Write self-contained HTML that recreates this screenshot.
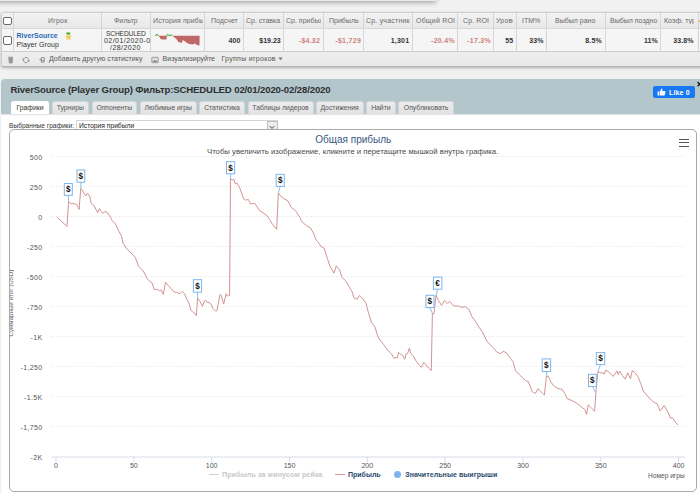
<!DOCTYPE html>
<html><head><meta charset="utf-8">
<style>
*{margin:0;padding:0;box-sizing:border-box}
html,body{width:700px;height:494px;overflow:hidden}
body{position:relative;background:#f1f1f1;font-family:"Liberation Sans",sans-serif;color:#333}
.a{position:absolute;white-space:nowrap}
.vl{position:absolute;width:1px;background:#d6d6d6;top:13px;height:38px}
.th{position:absolute;top:17.2px;font-size:7px;line-height:7px;color:#6a6a6a;white-space:nowrap}
.td{position:absolute;top:37.4px;font-size:7px;line-height:7px;color:#333;font-weight:bold;white-space:nowrap;text-align:right;width:60px}
.red{color:#cf7f7f}
.tab{position:absolute;top:101px;height:13px;background:linear-gradient(#ececec,#e2e2e2);border:1px solid #d2d6d8;border-bottom:none;border-radius:3px 3px 0 0;font-size:6.8px;line-height:11px;color:#555;text-align:center;white-space:nowrap}
.yl{position:absolute;left:2.5px;margin-top:.7px;font-size:7px;line-height:7px;color:#555;text-align:right;width:40px;white-space:nowrap;letter-spacing:.35px}
.xl{position:absolute;top:462.3px;font-size:7px;line-height:7px;color:#555;white-space:nowrap;width:30px;text-align:center}
.tb{position:absolute;top:55.4px;font-size:7px;line-height:7px;color:#555;white-space:nowrap}
</style></head><body>

<!-- top panel shadow -->
<div class="a" style="left:-5px;top:-10px;width:441px;height:11px;background:#ebebeb;box-shadow:0 1.5px 5px rgba(0,0,0,.32)"></div>

<!-- table -->
<div class="a" style="left:1px;top:12px;width:720px;height:55px;border:1px solid #cfcfcf;border-bottom-color:#b4b4b4;border-radius:3px;background:#f5f5f5;box-shadow:0 1px 3px rgba(0,0,0,.28);overflow:hidden">
  <div class="a" style="left:0;top:0;width:720px;height:16px;background:linear-gradient(#f2f2f2,#e8e8e8);border-bottom:1px solid #d8d8d8"></div>
  <div class="a" style="left:0;top:38px;width:720px;height:16px;background:linear-gradient(#eeeeee,#e8e8e8);border-top:1px solid #cdcdcd"></div>
</div>
<!-- column separators -->
<div class="vl" style="left:13px"></div>
<div class="vl" style="left:101px"></div>
<div class="vl" style="left:150px"></div>
<div class="vl" style="left:204px"></div>
<div class="vl" style="left:243px"></div>
<div class="vl" style="left:283px"></div>
<div class="vl" style="left:323px"></div>
<div class="vl" style="left:363px"></div>
<div class="vl" style="left:412px"></div>
<div class="vl" style="left:457px"></div>
<div class="vl" style="left:493px"></div>
<div class="vl" style="left:516px"></div>
<div class="vl" style="left:546px"></div>
<div class="vl" style="left:605px"></div>
<div class="vl" style="left:660px"></div>
<div class="vl" style="left:698px"></div>

<!-- checkboxes -->
<div class="a" style="left:3px;top:16.5px;width:9px;height:8.5px;border:1.5px solid #6a6a6a;border-radius:2px;background:#fff"></div>
<div class="a" style="left:3px;top:36px;width:9px;height:8.5px;border:1.5px solid #6a6a6a;border-radius:2px;background:#fff"></div>

<!-- header texts -->
<div class="th" style="left:48px;letter-spacing:.2px">Игрок</div>
<div class="th" style="left:114px">Фильтр</div>
<div class="th" style="left:153px;width:50px;overflow:hidden;letter-spacing:.1px">История прибыль</div>
<div class="th" style="left:211px">Подсчет</div>
<div class="th" style="left:246px">Ср. ставка</div>
<div class="th" style="left:286px;width:35px;overflow:hidden">Ср. прибыль</div>
<div class="th" style="left:329px">Прибыль</div>
<div class="th" style="left:366px;letter-spacing:.2px">Ср. участник</div>
<div class="th" style="left:416px;letter-spacing:.2px">Общий ROI</div>
<div class="th" style="left:463px;letter-spacing:.1px">Ср. ROI</div>
<div class="th" style="left:496px;width:17px;overflow:hidden;letter-spacing:.2px">Уровень</div>
<div class="th" style="left:522px">ITM%</div>
<div class="th" style="left:555px">Выбыл рано</div>
<div class="th" style="left:610px">Выбыл поздно</div>
<div class="th" style="left:664px;width:30px;overflow:hidden">Коэф. турнира</div>
<div class="th" style="left:699px;color:#e0a040">•</div>

<!-- data row -->
<div class="a" style="left:16.5px;top:32.4px;font-size:7px;line-height:7px;font-weight:bold;color:#2d6bb5">RiverSource</div>
<div class="a" style="left:16.5px;top:41.3px;font-size:7px;line-height:7px;color:#333;letter-spacing:.1px">Player Group</div>
<!-- star -->
<svg class="a" style="left:64px;top:32px" width="9" height="9" viewBox="0 0 9 9"><path d="M2.2,0.4 h4.2 l-0.6,2.4 h-3z" fill="#4fa628"/><path d="M4.5,2 L5.4,4.1 L7.6,4.2 L5.9,5.6 L6.5,7.9 L4.5,6.6 L2.5,7.9 L3.1,5.6 L1.4,4.2 L3.6,4.1z" fill="#f3cf4f" stroke="#e6b93a" stroke-width=".3"/></svg>

<div class="a" style="left:106px;top:30.4px;font-size:6.6px;line-height:7px;color:#333;letter-spacing:-.1px">SCHEDULED</div>
<div class="a" style="left:104px;top:37.3px;font-size:7px;line-height:7px;color:#333;letter-spacing:.45px">02/01/2020-0</div>
<div class="a" style="left:110px;top:44.3px;font-size:7px;line-height:7px;color:#333;letter-spacing:.45px">/28/2020</div>
<!-- sparkline -->
<svg class="a" style="left:150px;top:30px" width="54" height="20" viewBox="150 30 54 20">
<path d="M158.7,35.8 L160.9,39.3 L162.8,39.6 L166.5,39.6 L166.9,35.8z M172.4,35.8 L176.5,39.3 L178.4,41.9 L181.7,43 L182.8,40 L185,41.5 L188.4,43.7 L192.5,44.5 L194.7,43.4 L197.3,44.9 L199.5,45.6 L199.6,35.8z" fill="#c06868"/>
<path d="M155.3,35.8 L156.8,34.4 L158.7,35.8 M166.5,35.8 L167.8,34.4 L169.4,35.8 L170.8,34.8 L172.4,35.8" fill="none" stroke="#5cb346" stroke-width="1.1"/>
</svg>
<div class="td" style="left:180.3px">400</div>
<div class="td" style="left:220.7px">$19.23</div>
<div class="td red" style="left:260px;letter-spacing:.2px">-$4.32</div>
<div class="td red" style="left:301.1px;letter-spacing:.3px">-$1,729</div>
<div class="td" style="left:349.3px;letter-spacing:.2px">1,301</div>
<div class="td red" style="left:395px;letter-spacing:.3px">-20.4%</div>
<div class="td red" style="left:431.1px;letter-spacing:.3px">-17.3%</div>
<div class="td" style="left:453.1px">55</div>
<div class="td" style="left:483.6px;letter-spacing:.1px">33%</div>
<div class="td" style="left:542px;letter-spacing:.2px">8.5%</div>
<div class="td" style="left:597.9px;letter-spacing:.1px">11%</div>
<div class="td" style="left:633.6px;letter-spacing:.1px">33.8%</div>

<!-- toolbar -->
<svg class="a" style="left:0;top:50px" width="50" height="18" viewBox="0 50 50 18">
<path d="M8.2,57.2 h5 M8.9,58 h3.6 l-.4,5 h-2.8z" fill="#9a9a9a" stroke="#8a8a8a" stroke-width=".8"/>
<path d="M24.3,58.2 a2.5,2.5 0 0 1 3.9,3.1 M27.7,61.9 a2.5,2.5 0 0 1 -3.9,-3.1" fill="none" stroke="#8e8e8e" stroke-width=".9"/>
<path d="M27.9,60.2 l.8,1.4 l.9,-1.3 M23.9,59.8 l-.7,-1.4 l-.9,1.3" fill="none" stroke="#8e8e8e" stroke-width=".7"/>
<path d="M41.3,57.6 h3 v3 h-3z M39.4,59.5 h1.9 v2.7 h2.7 v-1.6" fill="none" stroke="#8a8a8a" stroke-width=".9"/>
</svg>
<div class="tb" style="left:49px;letter-spacing:.05px">Добавить другую статистику</div>
<svg class="a" style="left:151px;top:56px" width="8" height="8" viewBox="0 0 8 8"><rect x=".8" y="1.3" width="6.4" height="5.4" rx=".6" fill="#ddd" stroke="#8a8a8a" stroke-width=".8"/><path d="M1.5,6 L3.3,3.8 L4.6,5 L5.4,4.3 L6.6,6z" fill="#888"/></svg>
<div class="tb" style="left:162.6px">Визуализируйте</div>
<div class="tb" style="left:221.4px;letter-spacing:.3px">Группы игроков</div>
<svg class="a" style="left:278px;top:57px" width="5" height="4" viewBox="0 0 5 4"><path d="M0.3,0.6 h4.4 L2.5,3.3z" fill="#777"/></svg>

<!-- blue header panel -->
<div class="a" style="left:1px;top:79px;width:710px;height:35px;background:#b3c6cc;border-radius:4px 0 0 0"></div>
<div class="a" style="left:10.5px;top:85.2px;font-size:9.6px;line-height:9px;font-weight:bold;color:#2f2f2f;letter-spacing:-.14px">RiverSource (Player Group) Фильтр:SCHEDULED 02/01/2020-02/28/2020</div>

<!-- tabs -->
<div class="tab" style="left:11px;width:38px;background:#fff;border-color:#fff;color:#333">Графики</div>
<div class="tab" style="left:51.5px;width:37.5px">Турниры</div>
<div class="tab" style="left:91.5px;width:45.5px">Оппоненты</div>
<div class="tab" style="left:140px;width:56.6px">Любимые игры</div>
<div class="tab" style="left:198.6px;width:46.8px">Статистика</div>
<div class="tab" style="left:247.5px;width:66px">Таблицы лидеров</div>
<div class="tab" style="left:315.6px;width:48px">Достижения</div>
<div class="tab" style="left:365.7px;width:30.4px">Найти</div>
<div class="tab" style="left:397.9px;width:56.4px">Опубликовать</div>

<!-- like -->
<div class="a" style="left:653px;top:86.4px;width:42px;height:12px;background:#1877f2;border-radius:2px"></div>
<svg class="a" style="left:657px;top:88px" width="9" height="8" viewBox="0 0 9 8"><path d="M0.6,3.6 h1.6 v4 h-1.6z M2.8,3.6 L4.6,0.6 Q5.6,0.6 5.4,2 L5.2,3 h2.6 q.8,.1 .6,1 l-.6,3 q-.2,.6 -.8,.6 h-4.2z" fill="#fff"/></svg>
<div class="a" style="left:669px;top:88.7px;font-size:7px;line-height:7px;font-weight:bold;color:#fff;letter-spacing:.15px">Like 0</div>
<svg class="a" style="left:696px;top:80px" width="4" height="8" viewBox="696 80 4 8"><path d="M697.6,82 L701.5,86.4 M697.6,86.4 L701.5,82" stroke="#111" stroke-width="1.3"/></svg>

<!-- white content -->
<div class="a" style="left:1.2px;top:114px;width:710px;height:390px;background:#fff;box-shadow:inset 0 1px 1px rgba(0,0,0,.12)"></div>
<div class="a" style="left:9px;top:122.5px;font-size:6.6px;line-height:6px;color:#333">Выбранные графики:</div>
<div class="a" style="left:76px;top:120.4px;width:202px;height:10px;border:1px solid #d4d4d4;border-bottom:none;background:#fff"></div>
<div class="a" style="left:79px;top:122.5px;font-size:6.7px;line-height:6px;color:#222">История прибыли</div>
<div class="a" style="left:267px;top:120.6px;width:10.6px;height:9px;border:1px solid #bdbdbd;background:#ececec"></div>
<svg class="a" style="left:269px;top:125px" width="6" height="5" viewBox="0 0 6 5"><path d="M0.8,1.2 L3,3.4 L5.2,1.2" fill="none" stroke="#444" stroke-width="1" stroke-linejoin="miter"/></svg>

<!-- chart container -->
<div class="a" style="left:9px;top:129px;width:688px;height:363px;border:1.6px solid #a8a8a8;border-radius:5px;background:#fff;overflow:hidden">
  <div class="a" style="left:0.6px;top:172.9px;font-size:6.2px;line-height:6px;color:#555;transform:translate(-50%,-50%) rotate(-90deg)">Суммарный итог (USD)</div>
</div>

<!-- chart texts -->
<div class="a" style="left:315.3px;top:135.2px;font-size:10px;line-height:10px;color:#375882">Общая прибыль</div>
<div class="a" style="left:207px;top:147.5px;font-size:7.74px;line-height:7px;color:#4a4a4a">Чтобы увеличить изображение, кликните и перетащите мышкой внутрь графика.</div>
<div class="yl" style="top:153px">500</div>
<div class="yl" style="top:183px">250</div>
<div class="yl" style="top:213px">0</div>
<div class="yl" style="top:243px">-250</div>
<div class="yl" style="top:273px">-500</div>
<div class="yl" style="top:303px">-750</div>
<div class="yl" style="top:333px">-1K</div>
<div class="yl" style="top:363px">-1,250</div>
<div class="yl" style="top:393px">-1.5K</div>
<div class="yl" style="top:423px">-1,750</div>
<div class="yl" style="top:453px">-2K</div>
<div class="xl" style="left:41px">0</div>
<div class="xl" style="left:118.8px">50</div>
<div class="xl" style="left:196.6px">100</div>
<div class="xl" style="left:274.5px">150</div>
<div class="xl" style="left:352.3px">200</div>
<div class="xl" style="left:430.1px">250</div>
<div class="xl" style="left:508px">300</div>
<div class="xl" style="left:585.8px">350</div>
<div class="xl" style="left:663.6px">400</div>
<div class="a" style="left:648px;top:472px;font-size:6.6px;line-height:7px;color:#555">Номер игры</div>
<!-- legend -->
<div class="a" style="left:209px;top:474px;width:9.5px;height:1px;background:#cfcfcf"></div>
<div class="a" style="left:222px;top:471px;font-size:7px;line-height:7px;font-weight:bold;color:#c8c8c8;letter-spacing:.18px">Прибыль за минусом рейка</div>
<div class="a" style="left:335px;top:474px;width:9.5px;height:1px;background:#e39a9a"></div>
<div class="a" style="left:348px;top:471px;font-size:7px;line-height:7px;font-weight:bold;color:#274b6d">Прибыль</div>
<div class="a" style="left:393.8px;top:471.2px;width:7px;height:7px;border-radius:50%;background:#7cb5ec"></div>
<div class="a" style="left:405.2px;top:471px;font-size:7px;line-height:7px;font-weight:bold;color:#274b6d;letter-spacing:.07px">Значительные выигрыши</div>
<!-- hamburger -->
<div class="a" style="left:679.4px;top:138.7px;width:10px;height:1.4px;background:#555"></div>
<div class="a" style="left:679.4px;top:142.1px;width:10px;height:1.4px;background:#555"></div>
<div class="a" style="left:679.4px;top:145.5px;width:10px;height:1.2px;background:#555"></div>
<svg class="a" style="left:0;top:0" width="700" height="494" viewBox="0 0 700 494">
<line x1="51" y1="156.5" x2="685" y2="156.5" stroke="#e4e4e4" stroke-width="1" stroke-dasharray="1,1.5"/>
<line x1="51" y1="186.5" x2="685" y2="186.5" stroke="#e4e4e4" stroke-width="1" stroke-dasharray="1,1.5"/>
<line x1="51" y1="216.5" x2="685" y2="216.5" stroke="#e4e4e4" stroke-width="1" stroke-dasharray="1,1.5"/>
<line x1="51" y1="246.5" x2="685" y2="246.5" stroke="#e4e4e4" stroke-width="1" stroke-dasharray="1,1.5"/>
<line x1="51" y1="276.5" x2="685" y2="276.5" stroke="#e4e4e4" stroke-width="1" stroke-dasharray="1,1.5"/>
<line x1="51" y1="306.5" x2="685" y2="306.5" stroke="#e4e4e4" stroke-width="1" stroke-dasharray="1,1.5"/>
<line x1="51" y1="336.5" x2="685" y2="336.5" stroke="#e4e4e4" stroke-width="1" stroke-dasharray="1,1.5"/>
<line x1="51" y1="366.5" x2="685" y2="366.5" stroke="#e4e4e4" stroke-width="1" stroke-dasharray="1,1.5"/>
<line x1="51" y1="396.5" x2="685" y2="396.5" stroke="#e4e4e4" stroke-width="1" stroke-dasharray="1,1.5"/>
<line x1="51" y1="426.5" x2="685" y2="426.5" stroke="#e4e4e4" stroke-width="1" stroke-dasharray="1,1.5"/>
<line x1="51.5" y1="457" x2="685" y2="457" stroke="#d6dce6" stroke-width="1"/>
<line x1="56.0" y1="457" x2="56.0" y2="462" stroke="#d6dce6" stroke-width="1"/>
<line x1="133.8" y1="457" x2="133.8" y2="462" stroke="#d6dce6" stroke-width="1"/>
<line x1="211.7" y1="457" x2="211.7" y2="462" stroke="#d6dce6" stroke-width="1"/>
<line x1="289.5" y1="457" x2="289.5" y2="462" stroke="#d6dce6" stroke-width="1"/>
<line x1="367.3" y1="457" x2="367.3" y2="462" stroke="#d6dce6" stroke-width="1"/>
<line x1="445.1" y1="457" x2="445.1" y2="462" stroke="#d6dce6" stroke-width="1"/>
<line x1="523.0" y1="457" x2="523.0" y2="462" stroke="#d6dce6" stroke-width="1"/>
<line x1="600.8" y1="457" x2="600.8" y2="462" stroke="#d6dce6" stroke-width="1"/>
<line x1="678.6" y1="457" x2="678.6" y2="462" stroke="#d6dce6" stroke-width="1"/>
<path d="M57.3,217.5 L67,226.4 L68.6,201.3 L71,203.7 L74.3,203.7 L76.7,204.5 L79.1,209.4 L80.8,188.3 L83.2,191.6 L85.6,196 L87.6,193.2 L89.7,196.4 L91.3,203.7 L93.7,205.3 L97.8,212.6 L99.4,208.6 L102.6,213.4 L105,211.5 L107.5,212.6 L110,216.7 L112.3,220.7 L115.6,224 L118,229.6 L121.5,236.2 L123.1,243.5 L127.1,249.1 L131.2,253.2 L135.2,257.2 L138.5,266.2 L143.3,271 L147.4,279.1 L152.2,283.2 L154.2,289.6 L157.1,289.3 L159.5,290.8 L161.2,290 L163.3,294.5 L165.5,282.3 L168.4,285.6 L174.1,292 L176.5,292.5 L179.8,293.7 L182.2,291.3 L184.6,293.7 L186.7,299.2 L188.5,302.2 L190.9,310.1 L192.8,311.9 L194.6,313.1 L196.4,315.5 L197.6,297.9 L200,301.6 L202.5,306.4 L204.3,301 L205.5,300.1 L207.3,302.6 L209.2,302.6 L211,304 L212.8,308.3 L215.8,311.3 L217,310.1 L220.1,294.3 L221.3,295.5 L223.7,304 L226.2,293.7 L227.4,296.1 L229.6,295.5 L230.5,179.1 L232.6,180 L233.8,179.1 L235.4,184 L237,183.2 L240.2,188.9 L243.5,198.6 L245.9,200.2 L248.3,199.4 L250.8,204.3 L252.4,203.4 L254.8,203.4 L259.7,210.7 L263.7,213.2 L267.8,216.4 L272.6,224.5 L276.7,229.4 L278.3,192.9 L281.5,197 L284,198.6 L288,201 L291.3,207.5 L293.7,209.1 L296.1,211.5 L300.2,218 L301.5,221.3 L307.1,226.2 L310.4,227.8 L313.6,233.5 L316.1,240 L318.5,242.4 L320.9,246.4 L324.1,248.1 L327.4,258.6 L329.8,265.9 L333.9,273.2 L336.3,265.9 L339.5,269.9 L342,277.2 L346,281.3 L349,286.5 L352.3,292.1 L353.9,297.8 L357.1,299.4 L359.6,295.4 L362.8,298.6 L366.1,303.5 L368.5,313.2 L371.7,322.9 L375,327 L377.4,335.1 L379.8,339.9 L383.9,344.8 L387.1,349.6 L390,352.3 L392,354.8 L394,358.3 L396.1,357.3 L397.1,358.3 L398.6,352.3 L400.6,354.3 L402.7,355.3 L404.7,359.4 L406.2,353.8 L407.7,353.3 L409.4,348 L410.7,353.3 L413.3,355.8 L416.3,361.4 L419.4,365.4 L421.4,367.4 L423.9,362.4 L425.9,364.9 L428.5,368 L431.3,370.5 L432.4,313.5 L434,313.5 L436,295.3 L438.5,300.4 L441.5,305.4 L444.6,300.4 L447.6,303.4 L449.6,301.4 L453.7,306 L458.7,306 L461.8,307.5 L464.8,306.5 L468.9,309.5 L471.9,316.6 L474.9,320.6 L480,328.7 L482.3,331.9 L487.1,341.6 L492,346.4 L496.9,352.1 L500.1,353.7 L503.3,351.3 L506.6,352.9 L510.6,358.6 L513.1,361.8 L515.5,370.7 L519.5,374.8 L523.6,378.8 L526.8,381.3 L528.2,381.3 L532.3,391.8 L535.5,393.4 L538,388.6 L541.2,391.8 L544.4,395.1 L546.4,376.4 L548.5,376.4 L550.9,382.1 L554.1,386.2 L558.2,388.6 L562.2,389.4 L564.7,393.4 L567.1,398.3 L572,400.7 L576.8,403.2 L581.7,407.2 L584.9,409.6 L586.5,414.5 L588.2,404.8 L590.6,407.2 L594.6,411.3 L595.9,392.6 L597.9,371.6 L600.5,372.8 L603.2,372.8 L604.1,374.2 L605.9,370 L609.6,372.8 L613.2,376.4 L616.9,371 L618.3,374.6 L619.6,371 L622.3,375.5 L625.1,379.1 L627.8,372.8 L630.5,378.8 L632.3,370.4 L635.1,372.8 L637.8,376.4 L640.5,382.8 L643.3,391 L647.8,396.5 L653.3,401.9 L657,403.7 L660.2,411 L664.2,405.6 L667.9,411.9 L670.6,418.3 L672.4,417.8 L675.2,422 L677.9,425" fill="none" stroke="#d39393" stroke-width="1" stroke-linejoin="round"/>
<path d="M68.3,195.3 L68.6,201.3" stroke="#7cb5ec" stroke-width="0.9" fill="none"/>
<rect x="64.3" y="183.5" width="8.0" height="11.8" fill="#fff" stroke="#7cb5ec" stroke-width="1"/>
<text x="68.3" y="192.0" text-anchor="middle" font-family="Liberation Sans" font-weight="bold" font-size="8.2" fill="#111">$</text>
<path d="M80.9,182.2 L80.8,188.3" stroke="#7cb5ec" stroke-width="0.9" fill="none"/>
<rect x="77" y="170" width="7.8" height="12.2" fill="#fff" stroke="#7cb5ec" stroke-width="1"/>
<text x="80.9" y="178.9" text-anchor="middle" font-family="Liberation Sans" font-weight="bold" font-size="8.2" fill="#111">$</text>
<path d="M197.5,292.2 L197.6,297.9" stroke="#7cb5ec" stroke-width="0.9" fill="none"/>
<rect x="193.4" y="279.7" width="8.2" height="12.5" fill="#fff" stroke="#7cb5ec" stroke-width="1"/>
<text x="197.5" y="288.9" text-anchor="middle" font-family="Liberation Sans" font-weight="bold" font-size="8.2" fill="#111">$</text>
<path d="M230.6,173.8 L230.5,179.1" stroke="#7cb5ec" stroke-width="0.9" fill="none"/>
<rect x="226.5" y="161.7" width="8.1" height="12.1" fill="#fff" stroke="#7cb5ec" stroke-width="1"/>
<text x="230.6" y="170.5" text-anchor="middle" font-family="Liberation Sans" font-weight="bold" font-size="8.2" fill="#111">$</text>
<path d="M280.2,186.4 L278.3,192.9" stroke="#7cb5ec" stroke-width="0.9" fill="none"/>
<rect x="276.2" y="174.3" width="8.1" height="12.1" fill="#fff" stroke="#7cb5ec" stroke-width="1"/>
<text x="280.2" y="183.1" text-anchor="middle" font-family="Liberation Sans" font-weight="bold" font-size="8.2" fill="#111">$</text>
<path d="M429.9,307.5 L432.4,313.5" stroke="#7cb5ec" stroke-width="0.9" fill="none"/>
<rect x="425.9" y="295.3" width="8.1" height="12.2" fill="#fff" stroke="#7cb5ec" stroke-width="1"/>
<text x="429.9" y="304.2" text-anchor="middle" font-family="Liberation Sans" font-weight="bold" font-size="8.2" fill="#111">$</text>
<path d="M437.6,289.2 L436,295.3" stroke="#7cb5ec" stroke-width="0.9" fill="none"/>
<rect x="433.4" y="277.1" width="8.5" height="12.1" fill="#fff" stroke="#7cb5ec" stroke-width="1"/>
<text x="437.6" y="285.9" text-anchor="middle" font-family="Liberation Sans" font-weight="bold" font-size="8.2" fill="#111">€</text>
<path d="M546.4,371.5 L547.1,376.4" stroke="#7cb5ec" stroke-width="0.9" fill="none"/>
<rect x="542.2" y="358.9" width="8.4" height="12.6" fill="#fff" stroke="#7cb5ec" stroke-width="1"/>
<text x="546.4" y="368.2" text-anchor="middle" font-family="Liberation Sans" font-weight="bold" font-size="8.2" fill="#111">$</text>
<path d="M592.4,386.6 L595.9,392.6" stroke="#7cb5ec" stroke-width="0.9" fill="none"/>
<rect x="588.5" y="374.3" width="7.8" height="12.3" fill="#fff" stroke="#7cb5ec" stroke-width="1"/>
<text x="592.4" y="383.3" text-anchor="middle" font-family="Liberation Sans" font-weight="bold" font-size="8.2" fill="#111">$</text>
<path d="M600.5,364.6 L597.9,371.6" stroke="#7cb5ec" stroke-width="0.9" fill="none"/>
<rect x="596.3" y="352.6" width="8.4" height="12.0" fill="#fff" stroke="#7cb5ec" stroke-width="1"/>
<text x="600.5" y="361.3" text-anchor="middle" font-family="Liberation Sans" font-weight="bold" font-size="8.2" fill="#111">$</text>
</svg>

</body></html>
